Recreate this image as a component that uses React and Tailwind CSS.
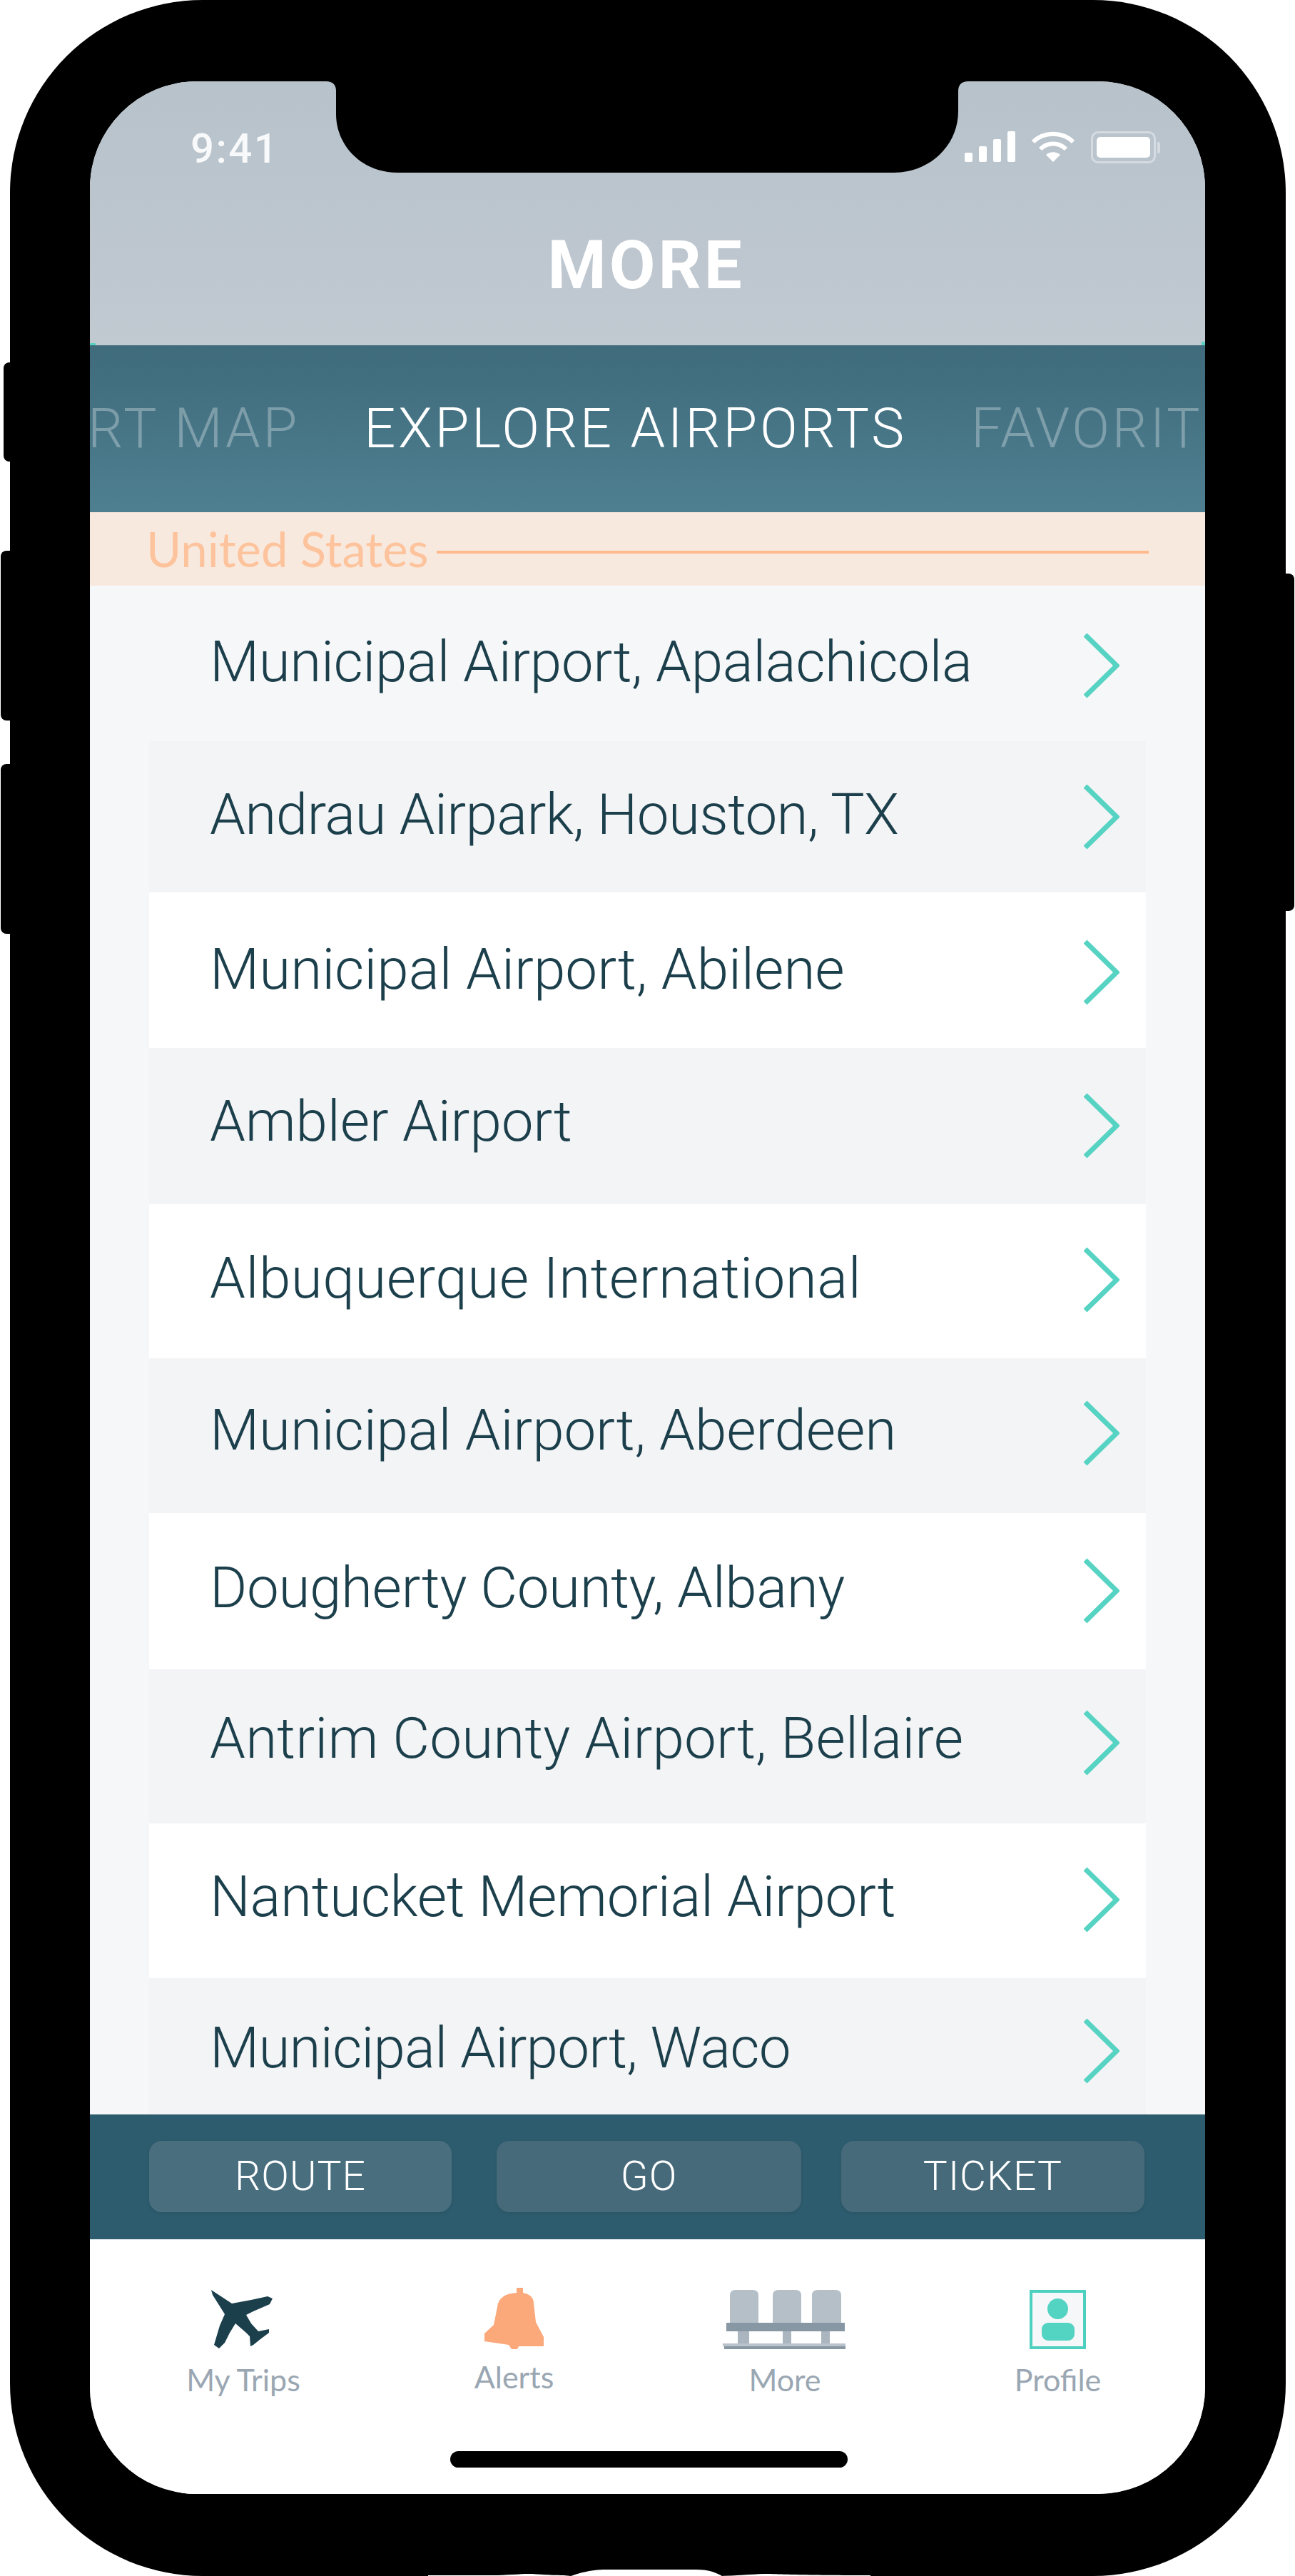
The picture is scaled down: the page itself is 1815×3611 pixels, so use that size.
const airports = [
  { name: "Municipal Airport, Apalachicola", bg: "h-[218px] bg-[#f6f7f9]", text: "mb-[4px] tracking-[-0.4px]", chevron: "mt-[6px]" },
  { name: "Andrau Airpark, Houston, TX", bg: "h-[212px] bg-[#f3f4f6]", text: "mb-[6px] tracking-[-0.66px]", chevron: "" },
  { name: "Municipal Airport, Abilene", bg: "h-[218px] bg-white", text: "mb-[2px] tracking-[0px]", chevron: "mt-[6px]" },
  { name: "Ambler Airport", bg: "h-[219px] bg-[#f3f4f6]", text: "mb-[14px] tracking-[-0.16px]", chevron: "mb-[2px]" },
  { name: "Albuquerque International", bg: "h-[216px] bg-white", text: "mb-[8px] tracking-[0.46px]", chevron: "mb-[4px]" },
  { name: "Municipal Airport, Aberdeen", bg: "h-[217px] bg-[#f3f4f6]", text: "mb-[16px] tracking-[-0.14px]", chevron: "mb-[8px]" },
  { name: "Dougherty County, Albany", bg: "h-[219px] bg-white", text: "mb-[10px] tracking-[-0.4px]", chevron: "mb-[2px]" },
  { name: "Antrim County Airport, Bellaire", bg: "h-[216px] bg-[#f3f4f6]", text: "mb-[22px] tracking-[0.15px]", chevron: "mb-[10px]" },
  { name: "Nantucket Memorial Airport", bg: "h-[217px] bg-white", text: "mb-[12px] tracking-[-0.35px]", chevron: "mb-[4px]" },
  { name: "Municipal Airport, Waco", bg: "h-[217px] bg-[#f3f4f6]", text: "mb-[22px] tracking-[-0.8px]", chevron: "mb-[14px]" },
];

function Chevron({ className }) {
  return (
    <svg viewBox="0 0 50 92" className={`w-[50px] h-[92px] shrink-0 ${className}`} fill="none">
      <path d="M2 3 L46 46 L2 89" stroke="#56d3c2" strokeWidth="7" />
    </svg>
  );
}

function AirportRow({ row }) {
  return (
    <div className={`shrink-0 flex items-center justify-between pl-[85px] pr-[37px] ${row.bg}`}>
      <span className={`text-[80px] leading-none font-light text-[#1c3f4c] font-['Roboto',sans-serif] whitespace-nowrap ${row.text}`}>
        {row.name}
      </span>
      <Chevron className={row.chevron} />
    </div>
  );
}

function ActionButton({ label, className }) {
  return (
    <div className={`h-[100px] shrink-0 flex items-center justify-center rounded-[18px] shadow-[0_2px_4px_rgba(0,0,0,0.08)] text-[57px] tracking-[1px] text-white font-['Roboto',sans-serif] font-light ${className}`}>
      {label}
    </div>
  );
}

function PlaneIcon() {
  return (
    <svg viewBox="0 0 87 86" className="w-[87px] h-[86px] mr-[6px]">
      <path
        d="M1 3 L30 22 L57 17 L80 12 L87 15 L83 23 L60 33 L50 38 L57 50 L67 61 L82 58 L82 63 L70 72 L60 80 L56 82 L55 68 L50 63 L35 50 L27 63 L20 77 L12 85 L5 80 L13 53 L20 37 L3 10 Z"
        fill="#1c3f4c"
      />
    </svg>
  );
}

function BellIcon() {
  return (
    <svg viewBox="0 0 83 86" className="w-[83px] h-[86px]">
      <path
        d="M45 0 H54 V7 C64 9 69 14 69 22 L72 48 L83 69 V82 H48 L46 86 H38 L34 80 L0 75 V64 L13 52 L18 27 C19 15 28 8 45 7 Z"
        fill="#fba97a"
      />
    </svg>
  );
}

function SeatsIcon() {
  return (
    <svg viewBox="0 0 174 83" className="w-[174px] h-[83px]">
      <path d="M10 46 V8 Q10 0 18 0 H42 Q50 0 50 8 V46 Z" fill="#b5bfc8" />
      <path d="M70 46 V8 Q70 0 78 0 H102 Q110 0 110 8 V46 Z" fill="#b5bfc8" />
      <path d="M125 46 V8 Q125 0 133 0 H158 Q166 0 166 8 V46 Z" fill="#b5bfc8" />
      <rect x="21" y="58" width="16" height="18" fill="#aab5bf" />
      <rect x="84" y="58" width="12" height="18" fill="#aab5bf" />
      <rect x="138" y="58" width="12" height="18" fill="#aab5bf" />
      <path d="M5 46 H171 V58 H5 Z" fill="#8797a4" />
      <rect x="0" y="75" width="172" height="4" fill="#b9c3cb" />
      <rect x="2" y="79" width="170" height="4" fill="#8797a4" />
    </svg>
  );
}

function ProfileIcon() {
  return (
    <div className="w-[79px] h-[83px] border-[4px] border-[#4dd0bf] bg-[#f6f7f9] flex flex-col items-center pt-[8px] gap-[5px]">
      <div className="w-[29px] h-[29px] rounded-full bg-[#53d3c2]" />
      <div className="w-[46px] h-[25px] rounded-[9px] bg-[#53d3c2]" />
    </div>
  );
}

function NavItem({ icon, label, labelClass, className }) {
  return (
    <div className={`flex flex-col items-center ${className}`}>
      <div className="h-[87px] flex items-end">{icon}</div>
      <span className={`text-[43px] leading-[46px] whitespace-nowrap text-[#9aa7b3] font-['Lato',sans-serif] ${labelClass}`}>{label}</span>
    </div>
  );
}

function SignalIcon() {
  return (
    <svg viewBox="0 0 71 43" className="w-[71px] h-[43px]" fill="#fff">
      <rect x="0" y="30" width="11" height="13" rx="2" />
      <rect x="20" y="21" width="11" height="22" rx="2" />
      <rect x="40" y="11" width="11" height="32" rx="2" />
      <rect x="60" y="0" width="11" height="43" rx="2" />
    </svg>
  );
}

function WifiIcon() {
  return (
    <svg viewBox="0 0 60 43" className="w-[60px] h-[43px]" fill="none" stroke="#fff" strokeWidth="6">
      <path d="M2 15 C17 0 43 0 58 15" />
      <path d="M12 25 C22 15 38 15 48 25" />
      <path d="M30 43 L20 33 C26 28 34 28 40 33 Z" fill="#fff" stroke="none" />
    </svg>
  );
}

function BatteryIcon() {
  return (
    <div className="flex items-center">
      <div className="w-[91px] h-[45px] rounded-[10px] border-[3px] border-white/40 p-[5px]">
        <div className="w-full h-full rounded-[5px] bg-white" />
      </div>
      <div className="w-[4px] h-[16px] ml-[2px] rounded-r-[3px] bg-white/40" />
    </div>
  );
}

function Notch() {
  return (
    <svg viewBox="0 0 900 128" className="absolute z-10 top-0 left-[331px] w-[900px] h-[128px]">
      <path
        d="M0 0 Q14 0 14 14 V46 C14 90 50 128 100 128 H796 C846 128 886 90 886 42 V14 Q886 0 900 0 Z"
        fill="#000"
      />
    </svg>
  );
}

function BottomEdge() {
  return (
    <svg viewBox="0 0 620 11" className="absolute bottom-0 left-[586px] w-[620px] h-[11px]">
      <path
        d="M0 11 V10 H90 C110 10 130 8 140 8 C155 8 165 10 190 10 L200 11 C210 8 225 2 250 2 H375 C395 2 405 7 412 11 Z"
        fill="#fff"
      />
      <path d="M412 11 C440 10 460 8 475 8 C490 8 510 10 620 10 V11 Z" fill="#fff" />
    </svg>
  );
}

export default function App() {
  return (
    <div className="w-[1815px] h-[3611px] bg-white relative overflow-hidden">
      {/* side buttons */}
      <div className="absolute left-[5px] top-[508px] w-[20px] h-[139px] bg-black rounded-l-[8px]" />
      <div className="absolute left-[1px] top-[772px] w-[24px] h-[238px] bg-black rounded-l-[8px]" />
      <div className="absolute left-[1px] top-[1071px] w-[24px] h-[238px] bg-black rounded-l-[8px]" />
      <div className="absolute left-[1790px] top-[804px] w-[24px] h-[473px] bg-black rounded-r-[8px]" />

      <div className="ml-[14px] w-[1788px] h-[3611px] bg-black rounded-[270px] pt-[114px] pl-[112px] relative">
        <div className="w-[1563px] h-[3382px] rounded-[150px] overflow-hidden relative flex flex-col bg-[#f6f7f9]">
          <Notch />

          <div className="h-[370px] shrink-0 bg-gradient-to-b from-[#b7c2cb] to-[#c1c9d1] relative">
            <div className="flex justify-between pl-[141px] pr-[63px] pt-[70px]">
              <span className="text-[58px] leading-[48px] text-white/90 font-medium font-['Roboto',sans-serif] tracking-[2.5px]">9:41</span>
              <div className="flex items-start gap-[23px]">
                <SignalIcon />
                <WifiIcon />
                <BatteryIcon />
              </div>
            </div>
            <div className="text-center mt-[100px] pr-[4px] text-[94px] leading-[80px] font-bold tracking-[4px] text-white font-['Roboto',sans-serif]">
              MORE
            </div>
            <div className="absolute bottom-0 left-0 w-[8px] h-[3px] bg-[#56d3c2]" />
            <div className="absolute bottom-0 right-0 w-[5px] h-[5px] bg-[#56d3c2]" />
          </div>

          <div className="h-[234px] shrink-0 bg-gradient-to-b from-[#3f6b7b] to-[#4e7f91] flex items-center overflow-hidden text-[78px] leading-none tracking-[3.6px] font-['Roboto',sans-serif] font-light whitespace-nowrap">
            <div className="flex shrink-0 gap-[90px] ml-[-241px]">
              <span className="text-white/30">AIRPORT MAP</span>
              <span className="text-white">EXPLORE AIRPORTS</span>
              <span className="text-white/30">FAVORITES</span>
            </div>
          </div>

          <div className="h-[103px] shrink-0 bg-[#f8e9de] flex items-center pl-[79px] pr-[79px] gap-[11px]">
            <span className="text-[67px] leading-none text-[#fdc39c] font-['Lato',sans-serif] whitespace-nowrap">United States</span>
            <div className="flex-1 h-[4px] mt-[8px] bg-[#ffb98d]" />
          </div>

          <div className="h-[2143px] shrink-0 overflow-hidden px-[83px] flex flex-col">
            {airports.map((row) => (
              <AirportRow key={row.name} row={row} />
            ))}
          </div>

          <div className="h-[175px] shrink-0 bg-[#2d5c6e] flex items-start pt-[37px] pl-[83px]">
            <ActionButton label="ROUTE" className="w-[424px] bg-[#496f7f]" />
            <ActionButton label="GO" className="w-[427px] ml-[63px] bg-[#466a79]" />
            <ActionButton label="TICKET" className="w-[425px] ml-[56px] bg-[#466a79]" />
          </div>

          <div className="flex-1 bg-white relative pt-[67px]">
            <div className="flex pl-[135px]">
              <NavItem icon={<PlaneIcon />} label="My Trips" className="w-[160px]" labelClass="mt-[20px]" />
              <NavItem icon={<BellIcon />} label="Alerts" className="w-[115px] ml-[242px]" labelClass="mt-[16px]" />
              <NavItem icon={<SeatsIcon />} label="More" className="w-[174px] ml-[235px]" labelClass="mt-[20px]" />
              <NavItem icon={<ProfileIcon />} label="Profile" className="w-[121px] ml-[235px]" labelClass="mt-[20px]" />
            </div>
            <div className="absolute left-[505px] top-[297px] w-[557px] h-[23px] rounded-full bg-black" />
          </div>
        </div>
        <BottomEdge />
      </div>
    </div>
  );
}
